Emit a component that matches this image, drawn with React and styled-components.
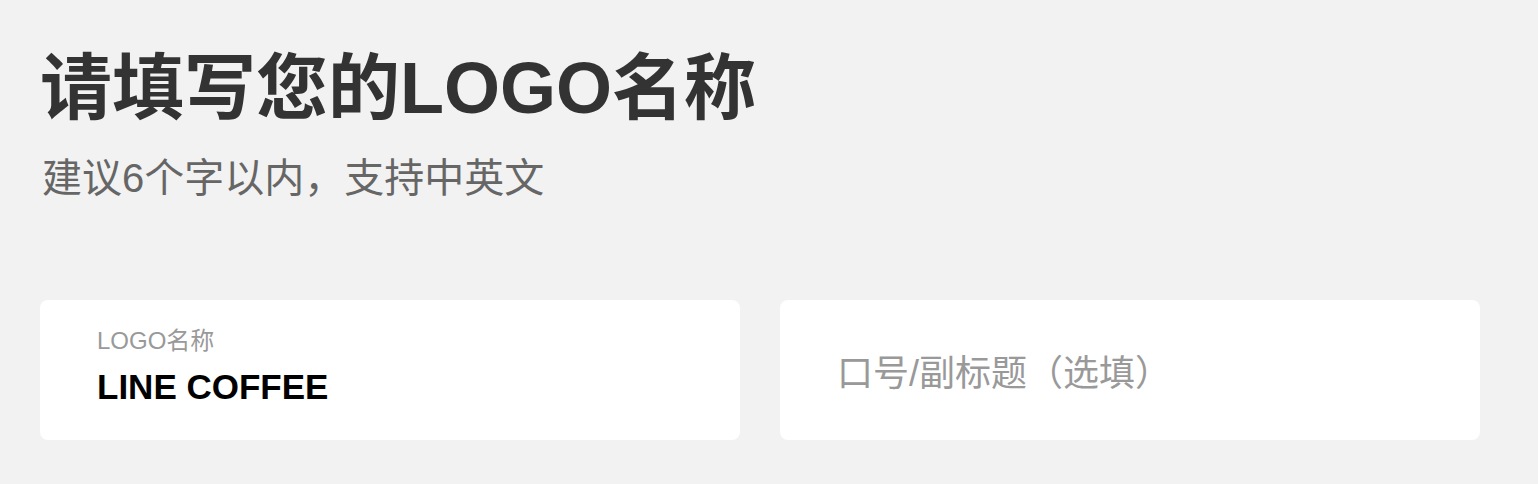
import React from 'react';
import styled, { createGlobalStyle } from 'styled-components';

const GlobalStyle = createGlobalStyle`
  html, body {
    margin: 0;
    padding: 0;
    background: #f2f2f2;
  }
  body {
    font-family: "Liberation Sans", "Noto Sans CJK SC", sans-serif;
  }
`;

const Page = styled.div`
  padding: 40px 40px 0;
  width: 1538px;
  height: 484px;
  box-sizing: border-box;
  background: #f2f2f2;
`;

const Title = styled.h1`
  margin: 0;
  font-size: 72px;
  line-height: 96px;
  font-weight: 700;
  color: #333;
`;

const Subtitle = styled.p`
  margin: 14px 0 0 2px;
  font-size: 40px;
  line-height: 56px;
  color: #666;
`;

const Fields = styled.div`
  display: grid;
  grid-template-columns: 700px 700px;
  gap: 40px;
  margin-top: 94px;
`;

const Card = styled.div`
  height: 140px;
  box-sizing: border-box;
  background: #fff;
  border-radius: 8px;
  padding: ${p => (p.$empty ? '0 57px' : '27px 57px 0')};
  display: flex;
  flex-direction: column;
  justify-content: ${p => (p.$empty ? 'center' : 'flex-start')};
`;

const Label = styled.div`
  font-size: 24px;
  line-height: 28px;
  color: #999;
`;

const Value = styled.div`
  margin-top: 12px;
  font-size: 35px;
  line-height: 40px;
  font-weight: 700;
  color: #000;
`;

const Placeholder = styled.div`
  font-size: 36px;
  line-height: 44px;
  color: #999;
  margin-top: 8px;
`;

export default function App() {
  return (
    <>
      <GlobalStyle />
      <Page>
        <Title>请填写您的LOGO名称</Title>
        <Subtitle>建议6个字以内，支持中英文</Subtitle>
        <Fields>
          <Card>
            <Label>LOGO名称</Label>
            <Value>LINE COFFEE</Value>
          </Card>
          <Card $empty>
            <Placeholder>口号/副标题（选填）</Placeholder>
          </Card>
        </Fields>
      </Page>
    </>
  );
}
